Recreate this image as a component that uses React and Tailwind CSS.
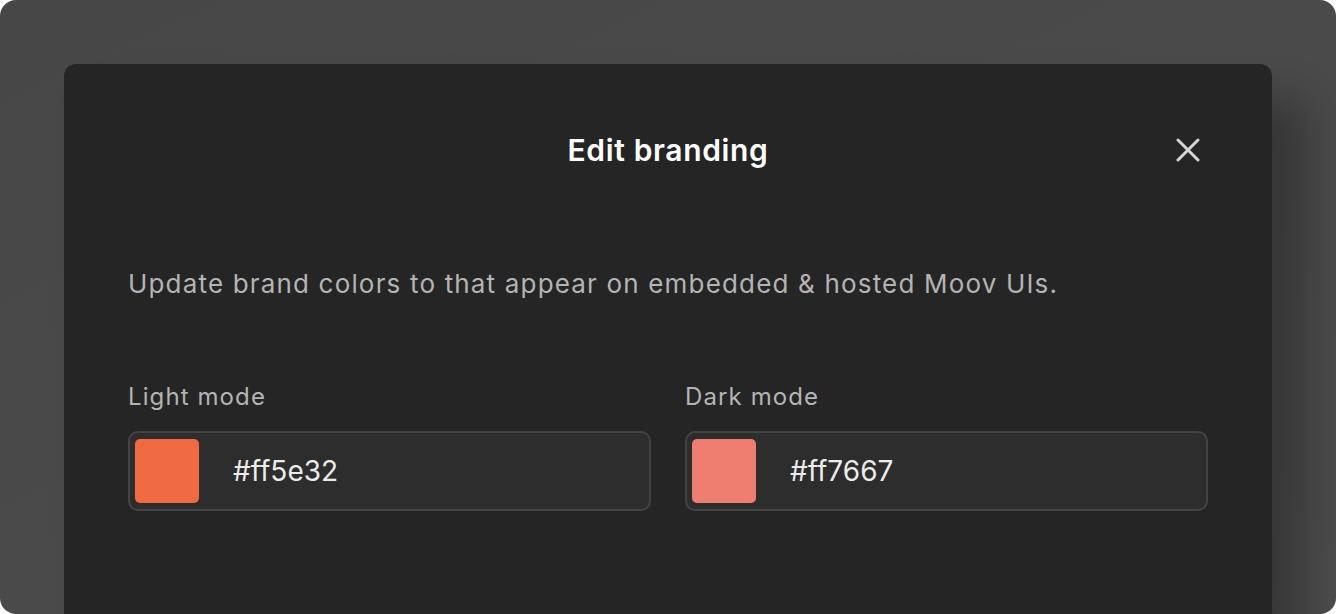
import React from "react";

function ColorField({ label, color, value }) {
  return (
    <div className="flex flex-col">
      <div className="text-[24px] leading-[32px] text-[#b4b4b4] font-normal tracking-[1.1px]">{label}</div>
      <div className="mt-[18px] h-[80px] rounded-[10px] border-2 border-[#444444] bg-[#2d2d2d] flex items-center pl-[5px]">
        <div className="w-[64px] h-[64px] rounded-[5px]" style={{ backgroundColor: color }} />
        <div className="ml-[34px] text-[28px] text-[#ececec] tracking-[0px]">{value}</div>
      </div>
    </div>
  );
}

export default function App() {
  return (
    <div className="w-[1336px] h-[614px] bg-white" style={{ fontFamily: "Inter, 'Noto Sans', sans-serif" }}>
      <div className="w-full h-full rounded-[16px] bg-gradient-to-br from-[#474747] to-[#4d4d4d] overflow-hidden pt-[64px] px-[64px] flex flex-col">
        <div className="flex-1 rounded-t-[12px] bg-[#252525] shadow-[36px_36px_44px_rgba(0,0,0,0.28)] px-[64px] flex flex-col">
          <div className="h-[172px] flex items-center justify-center relative">
            <div className="text-[30px] font-semibold text-white tracking-[0.65px]">Edit branding</div>
            <button className="absolute right-[8px] top-[74px] w-[24px] h-[24px] flex items-center justify-center">
              <svg width="24" height="24" viewBox="0 0 24 24" fill="none" stroke="#d6d6d6" strokeWidth="3" strokeLinecap="round">
                <path d="M2 2 L22 22 M22 2 L2 22" />
              </svg>
            </button>
          </div>
          <div className="mt-[30px] text-[26px] leading-[36px] text-[#b4b4b4] tracking-[1.17px]">
            Update brand colors to that appear on embedded &amp; hosted Moov UIs.
          </div>
          <div className="mt-[79px] grid grid-cols-2 gap-[34px]">
            <ColorField label="Light mode" color="#f06a42" value="#ff5e32" />
            <ColorField label="Dark mode" color="#ef7e71" value="#ff7667" />
          </div>
        </div>
      </div>
    </div>
  );
}
